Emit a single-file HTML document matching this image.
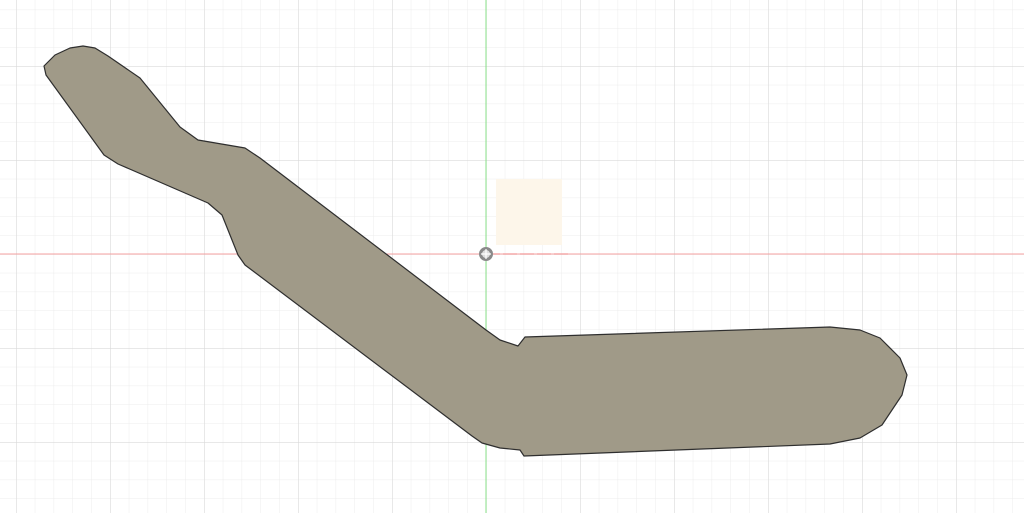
<!DOCTYPE html>
<html><head><meta charset="utf-8"><style>html,body{margin:0;padding:0;background:#fff;overflow:hidden}</style></head>
<body>
<svg width="1024" height="513" viewBox="0 0 1024 513" xmlns="http://www.w3.org/2000/svg">
<defs>
<pattern id="minor" x="486" y="254" width="18.8" height="18.8" patternUnits="userSpaceOnUse">
<path d="M0 0H18.8M0 0V18.8" stroke="#ececec" stroke-width="1" fill="none"/>
</pattern>
<pattern id="major" x="486" y="254" width="94" height="94" patternUnits="userSpaceOnUse">
<path d="M0 0H94M0 0V94" stroke="#d9d9d9" stroke-width="1.2" fill="none"/>
</pattern>
</defs>
<rect width="1024" height="513" fill="#fff"/>
<rect width="1024" height="513" fill="url(#minor)"/>
<rect width="1024" height="513" fill="url(#major)"/>
<rect x="496" y="179" width="66" height="66" fill="#fdf6ea"/>
<line x1="0" y1="254" x2="1024" y2="254" stroke="#f4a0a0" stroke-width="1"/>
<line x1="486" y1="0" x2="486" y2="513" stroke="#88e088" stroke-width="1"/>
<line x1="486" y1="254" x2="570" y2="254" stroke="#f4a0a0" stroke-width="1.5" stroke-dasharray="14 3" opacity="0.7"/>
<path d="M44 66 L55 55 L70 48 L83 46 L95 48 L108 56 L140 78 L180 127 L198 140 L245 148 L260 158 L486 330 L500 340 L518 346 L525 337 L830 327 L860 330 L880 338 L900 358 L907 375 L902 395 L882 425 L860 438 L830 444 L524 456 L520 450 L500 448 L482 443 L472 436 L245 265 L238 255 L222 215 L208 203 L118 164 L104 155 L46 75 Z" fill="#a09a88" stroke="#2e2e2e" stroke-width="1.2" stroke-linejoin="round"/>
<circle cx="486" cy="254" r="5.5" fill="#ddd" stroke="#8a8a8a" stroke-width="3"/>
<path d="M486 249 V259 M481 254 H491" stroke="#fff" stroke-width="1.2"/>
</svg>
</body></html>
